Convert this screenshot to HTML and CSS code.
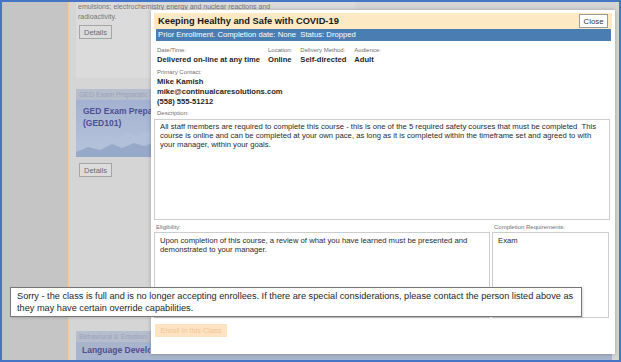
FILE: index.html
```html
<!DOCTYPE html>
<html lang="en">
<head>
  <meta charset="UTF-8" />
  <title>Course Details</title>
  <link rel="stylesheet" href="styles.css">
</head>
<body>

<div class="screen">
    <aside class="rail"></aside>

    <!-- catalog behind the dialog -->
    <main class="catalog">
        <section class="course course-top">
            <p class="blurb">bonding; solutions, colloids; suspensions, and<br>emulsions; electrochemistry energy and nuclear reactions and<br>radioactivity.</p>
            <button class="details">Details</button>
        </section>

        <section class="course course-ged">
            <div class="course-cat"><span class="clip">GED Exam Preparation</span></div>
            <div class="course-pic">
                <svg class="hills" viewBox="0 0 270 57" preserveAspectRatio="none">
                    <defs>
                        <linearGradient id="sky" x1="0" y1="0" x2="0" y2="1">
                            <stop offset="0" stop-color="#a3b2d0"/>
                            <stop offset="1" stop-color="#b7c4dc"/>
                        </linearGradient>
                    </defs>
                    <rect width="270" height="57" fill="url(#sky)"/>
                    <path d="M0 44 L10 40 L20 42 L32 35 L42 39 L52 33 L60 36 L74 31 L90 38 L110 34 L140 40 L180 36 L220 41 L270 37 L270 57 L0 57 Z" fill="#b3c0da"/>
                    <path d="M0 52 L12 47 L24 50 L36 44 L46 48 L58 43 L68 46 L80 42 L100 47 L130 45 L170 50 L210 46 L270 49 L270 57 L0 57 Z" fill="#97a9c9"/>
                </svg>
                <h3 class="course-name clip">GED Exam Preparation<br>(GED101)</h3>
            </div>
            <button class="details">Details</button>
        </section>

        <section class="course course-last">
            <div class="course-cat"><span class="clip">Behavioral &amp; Emotional Development</span></div>
            <div class="course-row">
                <h3 class="course-name clip">Language Development and Strategies</h3>
            </div>
        </section>
    </main>

    <!-- course dialog -->
    <div class="modal">
        <div class="modal-head">
            <h2>Keeping Healthy and Safe with COVID-19</h2>
            <button class="close">Close</button>
        </div>
        <div class="status">Prior Enrollment. Completion date: None&nbsp; Status: Dropped</div>

        <div class="modal-body">
            <div class="facts">
                <div class="fact"><span class="lbl">Date/Time:</span><b>Delivered on-line at any time</b></div>
                <div class="fact"><span class="lbl">Location:</span><b>Online</b></div>
                <div class="fact"><span class="lbl">Delivery Method:</span><b>Self-directed</b></div>
                <div class="fact"><span class="lbl">Audience:</span><b>Adult</b></div>
            </div>

            <div class="contact">
                <span class="lbl">Primary Contact:</span>
                <b>Mike Kamish</b>
                <b>mike@continualcaresolutions.com</b>
                <b>(558) 555-51212</b>
            </div>

            <span class="lbl desc-lbl">Description:</span>
            <div class="box desc">All staff members are required to complete this course - this is one of the 5 required safety courses that must be completed&nbsp; This<br>course is online and can be completed at your own pace, as long as it is completed within the timeframe set and agreed to with<br>your manager, within your goals.</div>

            <div class="pair">
                <div class="pair-main">
                    <span class="lbl">Eligibility:</span>
                    <div class="box elig">Upon completion of this course, a review of what you have learned must be presented and<br>demonstrated to your manager.</div>
                </div>
                <div class="pair-side">
                    <span class="lbl">Completion Requirements:</span>
                    <div class="box elig">Exam</div>
                </div>
            </div>

            <button class="enroll" disabled>Enroll in this Class</button>
        </div>
    </div>

    <!-- hover message on the disabled button -->
    <div class="tip">Sorry - the class is full and is no longer accepting enrollees. If there are special considerations, please contact the person listed above as<br>they may have certain override capabilities.</div>
</div>

</body>
</html>
```

FILE: styles.css
```css
/* page frame */
html, body {
    margin: 0;
    padding: 0;
    background: #ffffff;
}
body {
    font-family: "Liberation Sans", Arial, sans-serif;
}
.screen {
    position: relative;
    width: 621px;
    height: 362px;
    box-sizing: border-box;
    border: 2px solid #4675c5;
    display: flex;
    overflow: hidden;
    background: #d5d5d5;
}
.rail {
    width: 66px;
    flex: none;
    background: #c5c5c5;
    border-right: 1px solid #efcd93;
}

/* catalog cards behind the dialog */
.catalog {
    flex: 1;
    padding-left: 7px;
    display: flex;
    flex-direction: column;
    align-items: flex-start;
}
.course {
    width: 270px;
}
.course-top {
    width: 279px;
    margin-top: -10px;
    padding: 0 0 39px 2px;
    box-sizing: border-box;
    background: #dbdbdb;
}
.blurb {
    margin: 0;
    font-size: 7px;
    line-height: 10px;
    color: #767676;
    white-space: nowrap;
}
.details {
    display: block;
    height: 14px;
    width: 33px;
    margin: 3px 0 0 1px;
    padding: 0;
    background: #dcdcdc;
    border: 1px solid #a5a5a5;
    font-family: inherit;
    font-size: 7.5px;
    color: #6b6b7a;
}
/* the dialog hides everything right of this */
.clip {
    display: block;
    width: 68px;
    overflow: hidden;
    white-space: nowrap;
}
.course-ged {
    margin-top: 11px;
}
.course-cat {
    height: 11px;
    padding-left: 3px;
    background: #b6bdcc;
    color: #9aa4ba;
    font-size: 7px;
    line-height: 11px;
    white-space: nowrap;
}
.course-pic {
    position: relative;
    height: 57px;
    padding: 5px 0 0 7px;
    box-sizing: border-box;
}
.hills {
    position: absolute;
    left: 0;
    top: 0;
    width: 100%;
    height: 100%;
}
.course-name {
    position: relative;
    margin: 0;
    font-size: 8.5px;
    line-height: 12px;
    color: #4f4f93;
    white-space: nowrap;
}
.course-ged .details {
    margin-top: 6px;
    margin-left: 3px;
}
.course-last {
    width: 536px;
    margin-top: 154px;
}
.course-row {
    height: 20px;
    padding: 2px 0 0 6px;
    box-sizing: border-box;
    background: #a8b4cd;
}

/* dialog */
.modal {
    position: absolute;
    left: 149px;
    top: 8px;
    width: 464px;
    height: 344px;
    box-sizing: border-box;
    padding: 3px 3px 0 3px;
    background: #ffffff;
    box-shadow: 0 0 4px rgba(0, 0, 0, 0.25);
    color: #1f1f1f;
}
.modal-head {
    height: 16px;
    display: flex;
    align-items: center;
    justify-content: space-between;
    padding: 0 4px;
    background: #fde9c4;
}
.modal-head h2 {
    margin: 0;
    font-size: 9.3px;
    font-weight: bold;
    color: #1a1a1a;
}
.close {
    height: 14px;
    width: 29px;
    padding: 0;
    background: #ffffff;
    border: 1px solid #9a9a9a;
    font-family: inherit;
    font-size: 7.8px;
    color: #333;
}
.status {
    height: 12px;
    margin: 0 1px 0 2px;
    padding-left: 2px;
    background: #4a7eb3;
    color: #ffffff;
    font-size: 7.7px;
    line-height: 12px;
    white-space: nowrap;
}
.modal-body {
    display: flex;
    flex-direction: column;
    align-items: flex-start;
}
.lbl {
    display: block;
    font-size: 6px;
    line-height: 9px;
    color: #707070;
    white-space: nowrap;
}
.facts {
    display: flex;
    gap: 8px;
    margin-top: 5px;
    padding-left: 3px;
}
.fact,
.contact {
    display: flex;
    flex-direction: column;
}
.fact b,
.contact b {
    font-size: 7.6px;
    line-height: 10px;
    white-space: nowrap;
}
.contact {
    margin-top: 3px;
    padding-left: 3px;
}
.desc-lbl {
    margin-top: 2px;
    padding-left: 3px;
}
.box {
    box-sizing: border-box;
    border: 1px solid #cdcdcd;
    padding: 2px 5px;
    font-size: 7.7px;
    line-height: 9px;
    color: #2a2a2a;
    white-space: nowrap;
}
.desc {
    width: 456px;
    height: 101px;
    margin-top: 1px;
}
.pair {
    display: flex;
    gap: 2px;
    margin-top: 3px;
}
.pair .lbl {
    padding-left: 2px;
}
.pair-main .box {
    width: 336px;
}
.pair-side .box {
    width: 117px;
}
.elig {
    height: 86px;
    padding-top: 3px;
}
.enroll {
    height: 13px;
    width: 72px;
    margin: 6px 0 0 1px;
    padding: 0;
    border: none;
    background: #fde3c2;
    font-family: inherit;
    font-size: 7.4px;
    color: #f1c595;
}

/* tooltip */
.tip {
    position: absolute;
    left: 8px;
    top: 285px;
    width: 572px;
    height: 30px;
    box-sizing: border-box;
    padding: 2px 6px 0;
    background: #ffffff;
    border: 1px solid #777777;
    box-shadow: 1px 1px 2px rgba(0, 0, 0, 0.15);
    font-size: 9.2px;
    line-height: 12px;
    color: #262626;
    white-space: nowrap;
}
```
